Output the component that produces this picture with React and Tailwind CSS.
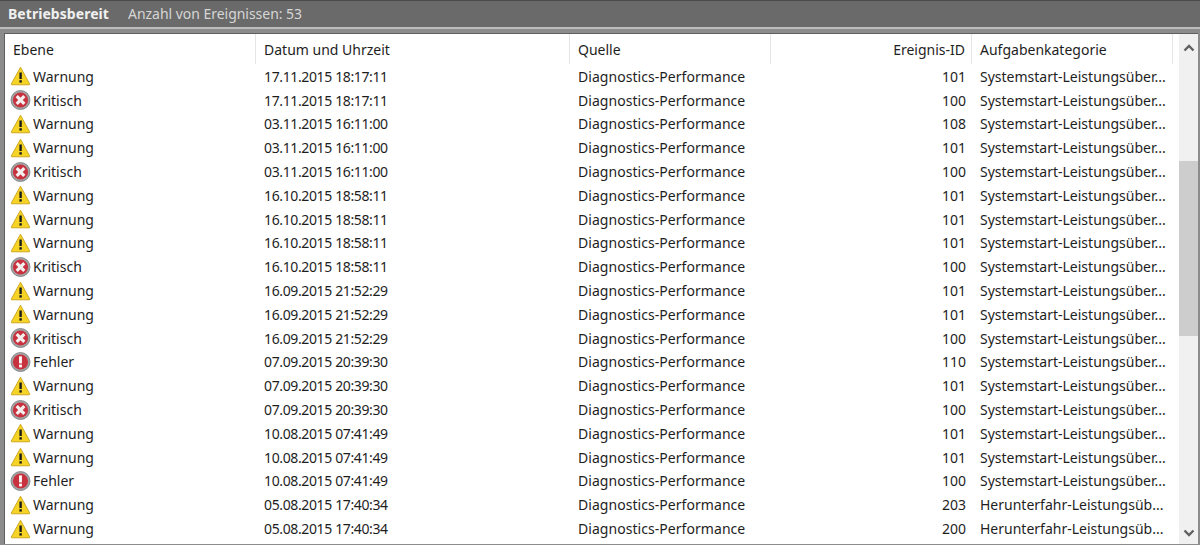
import React from 'react';

const rows = [
    ['w', '17.11.2015 18:17:11', 101, 'Systemstart-Leistungsüber...'],
    ['k', '17.11.2015 18:17:11', 100, 'Systemstart-Leistungsüber...'],
    ['w', '03.11.2015 16:11:00', 108, 'Systemstart-Leistungsüber...'],
    ['w', '03.11.2015 16:11:00', 101, 'Systemstart-Leistungsüber...'],
    ['k', '03.11.2015 16:11:00', 100, 'Systemstart-Leistungsüber...'],
    ['w', '16.10.2015 18:58:11', 101, 'Systemstart-Leistungsüber...'],
    ['w', '16.10.2015 18:58:11', 101, 'Systemstart-Leistungsüber...'],
    ['w', '16.10.2015 18:58:11', 101, 'Systemstart-Leistungsüber...'],
    ['k', '16.10.2015 18:58:11', 100, 'Systemstart-Leistungsüber...'],
    ['w', '16.09.2015 21:52:29', 101, 'Systemstart-Leistungsüber...'],
    ['w', '16.09.2015 21:52:29', 101, 'Systemstart-Leistungsüber...'],
    ['k', '16.09.2015 21:52:29', 100, 'Systemstart-Leistungsüber...'],
    ['f', '07.09.2015 20:39:30', 110, 'Systemstart-Leistungsüber...'],
    ['w', '07.09.2015 20:39:30', 101, 'Systemstart-Leistungsüber...'],
    ['k', '07.09.2015 20:39:30', 100, 'Systemstart-Leistungsüber...'],
    ['w', '10.08.2015 07:41:49', 101, 'Systemstart-Leistungsüber...'],
    ['w', '10.08.2015 07:41:49', 101, 'Systemstart-Leistungsüber...'],
    ['f', '10.08.2015 07:41:49', 100, 'Systemstart-Leistungsüber...'],
    ['w', '05.08.2015 17:40:34', 203, 'Herunterfahr-Leistungsüb...'],
    ['w', '05.08.2015 17:40:34', 200, 'Herunterfahr-Leistungsüb...'],
];

const labels = { w: 'Warnung', k: 'Kritisch', f: 'Fehler' };

const LevelIcon = ({ type }) => {
    if (type === 'w') {
        return (
            <svg width="21" height="20" viewBox="0 0 20 20" className="shrink-0">
                <path d="M10 1.2 L19.2 18 Q19.4 18.8 18.6 18.8 L1.4 18.8 Q0.6 18.8 0.8 18 Z" fill="#f6d426" stroke="#c9a21a" strokeWidth="0.9" />
                <rect x="8.9" y="6.5" width="2.4" height="6.5" fill="#1b1b1b" />
                <rect x="8.9" y="14.2" width="2.4" height="2.4" fill="#1b1b1b" />
            </svg>
        );
    }
    return (
        <svg width="21" height="20" viewBox="0 0 20 20" className="shrink-0">
            <circle cx="10" cy="10" r="9.5" fill="#a3a4a6" stroke="#77787b" strokeWidth="0.8" />
            <circle cx="10" cy="10" r="7.6" fill="#c8323e" />
            {type === 'k' ? (
                <path d="M6.2 6.2 L13.8 13.8 M13.8 6.2 L6.2 13.8" stroke="#f4f0f0" strokeWidth="3.2" />
            ) : (
                <>
                    <rect x="8.6" y="4.4" width="2.8" height="7" fill="#fff" />
                    <rect x="8.6" y="12.6" width="2.8" height="2.8" fill="#fff" />
                </>
            )}
        </svg>
    );
};

const HeaderCell = ({ className, children }) => (
    <div className={`h-[30px] flex items-center border-r border-[#e5e5e5] ${className}`}>{children}</div>
);

const App = () => {
    return (
        <div className="w-[1200px] h-[545px] overflow-hidden bg-[#6a6a6a] text-[14px] text-[#1e1e1e]" style={{ fontFamily: '"Noto Sans", "Open Sans", sans-serif' }}>
            {/* Titelleiste */}
            <div className="h-[27px] flex items-center pl-[8px] pb-[1px] border-t border-[#4a4a4a] text-[#f0f0f0]">
                <span className="font-bold w-[120px] tracking-[0.05px]">Betriebsbereit</span>
                <span className="text-[#d6d6d6] tracking-[-0.03px]">Anzahl von Ereignissen: 53</span>
            </div>
            <div className="h-[518px] border-t-2 border-[#bdbdbd] bg-[#8c8c8c] pt-[4px] pl-[4px] pr-[2px] pb-[1px]">
                <div className="h-[511px] flex bg-white border-l border-t border-[#5f5f5f]">
                    <div className="w-[1174px] overflow-hidden">
                        {/* Spalten */}
                        <div className="flex">
                            <HeaderCell className="w-[251px] pl-[8px]">Ebene</HeaderCell>
                            <HeaderCell className="w-[314px] pl-[8px]">Datum und Uhrzeit</HeaderCell>
                            <HeaderCell className="w-[201px] pl-[8px]">Quelle</HeaderCell>
                            <HeaderCell className="w-[201px] justify-end pr-[6px]">Ereignis-ID</HeaderCell>
                            <HeaderCell className="w-[201px] pl-[8px]">Aufgabenkategorie</HeaderCell>
                        </div>
                        {/* Zeilen */}
                        {rows.map((row, i) => (
                            <div key={i} className="h-[23.8px] flex items-center pt-[1px]">
                                <div className="w-[251px] pl-[5px] flex items-center gap-[2px]">
                                    <LevelIcon type={row[0]} />
                                    <span>{labels[row[0]]}</span>
                                </div>
                                <div className="w-[314px] pl-[8px] tracking-[-0.37px]">{row[1]}</div>
                                <div className="w-[201px] pl-[8px] tracking-[0.05px]">Diagnostics-Performance</div>
                                <div className="w-[201px] text-right pr-[6px]">{row[2]}</div>
                                <div className="w-[201px] pl-[8px] whitespace-nowrap">{row[3]}</div>
                            </div>
                        ))}
                    </div>
                    {/* Scrollbar */}
                    <div className="w-[19px] bg-[#f0f0f0] flex flex-col items-center">
                        <svg width="12" height="8" viewBox="0 0 12 8" className="mt-[10px]">
                            <path d="M1.5 6.5 L6 2 L10.5 6.5" fill="none" stroke="#606060" strokeWidth="2.4" />
                        </svg>
                        <div className="w-full h-[175px] bg-[#cdcdcd] mt-[109px]" />
                        <svg width="12" height="8" viewBox="0 0 12 8" className="mt-auto mb-[7px]">
                            <path d="M1.5 1.5 L6 6 L10.5 1.5" fill="none" stroke="#606060" strokeWidth="2.4" />
                        </svg>
                    </div>
                </div>
            </div>
        </div>
    );
};

export default App;
